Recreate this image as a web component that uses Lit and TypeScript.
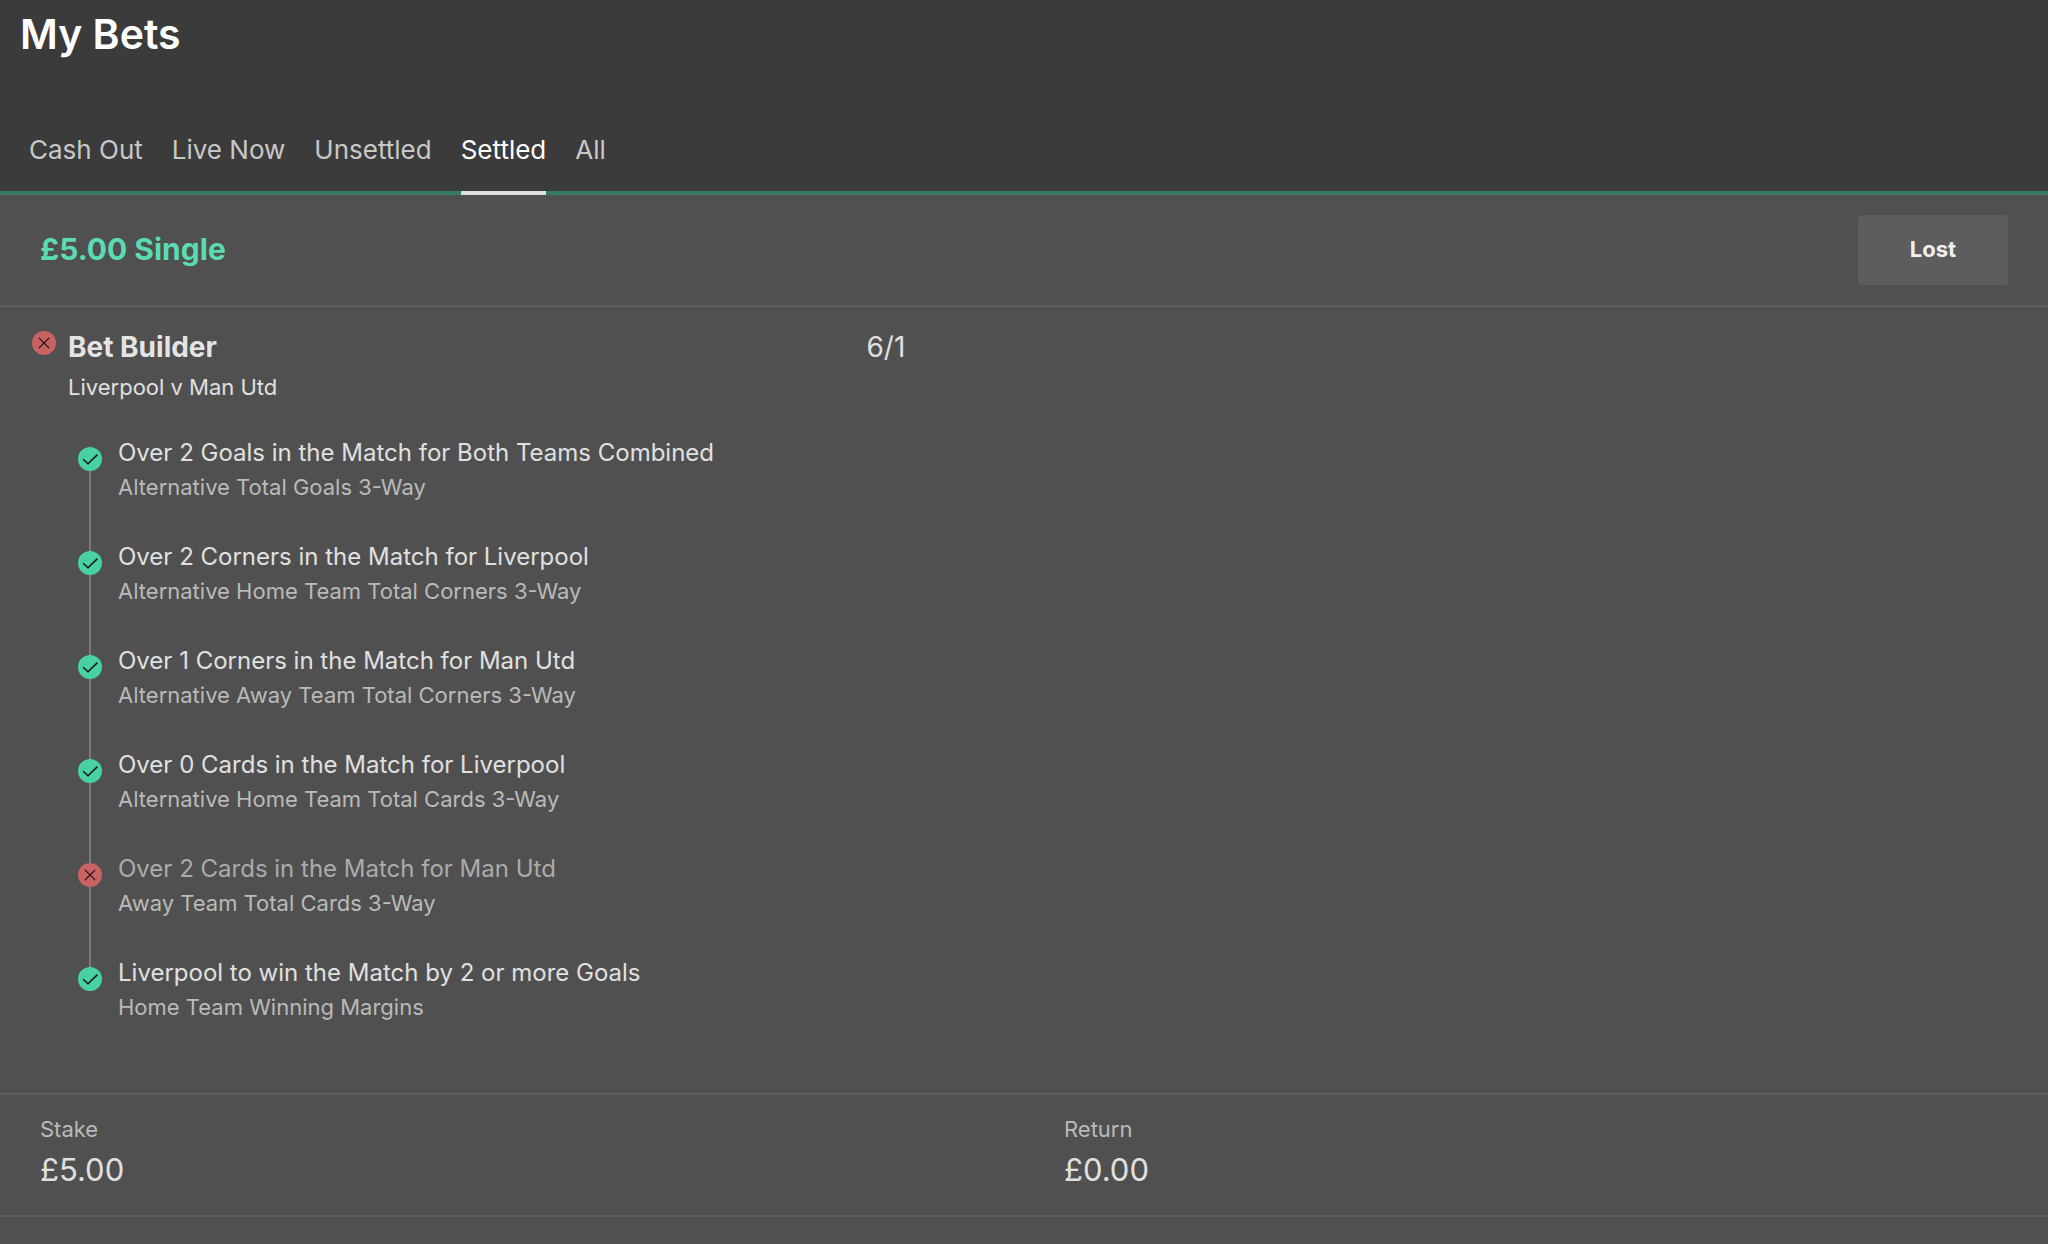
import { LitElement, html, css, svg, nothing } from "lit";
import { customElement, property, state } from "lit/decorators.js";
import { classMap } from "lit/directives/class-map.js";

type Result = "won" | "lost";

interface Leg {
  title: string;
  market: string;
  result: Result;
}

const TABS = ["Cash Out", "Live Now", "Unsettled", "Settled", "All"];

const LEGS: Leg[] = [
  { title: "Over 2 Goals in the Match for Both Teams Combined", market: "Alternative Total Goals 3-Way", result: "won" },
  { title: "Over 2 Corners in the Match for Liverpool", market: "Alternative Home Team Total Corners 3-Way", result: "won" },
  { title: "Over 1 Corners in the Match for Man Utd", market: "Alternative Away Team Total Corners 3-Way", result: "won" },
  { title: "Over 0 Cards in the Match for Liverpool", market: "Alternative Home Team Total Cards 3-Way", result: "won" },
  { title: "Over 2 Cards in the Match for Man Utd", market: "Away Team Total Cards 3-Way", result: "lost" },
  { title: "Liverpool to win the Match by 2 or more Goals", market: "Home Team Winning Margins", result: "won" },
];

@customElement("result-icon")
export class ResultIcon extends LitElement {
  @property() result: Result = "won";

  static styles = css`
    :host {
      display: block;
      flex: none;
      width: 24px;
      height: 24px;
    }
    .icon {
      display: block;
      width: 100%;
      height: 100%;
    }
    .mark {
      fill: none;
      stroke: #141414;
    }
    .won {
      fill: #48d1a4;
    }
    .lost {
      fill: #c96263;
    }
  `;

  render() {
    const won = this.result === "won";
    return html`<svg class="icon" viewBox="0 0 24 24" role="img" aria-label=${won ? "Won" : "Lost"}>
      ${svg`<circle class=${this.result} cx="12" cy="12" r="12" />`}
      ${won
        ? svg`<path class="mark" stroke-width="1.5" d="M5.2 12.3 L10 16.8 L19.4 7.6" />`
        : svg`<path class="mark" stroke-width="1.2" d="M6.9 6.9 L17.2 17.2 M17.2 6.9 L6.9 17.2" />`}
    </svg>`;
  }
}

@customElement("bet-leg")
export class BetLeg extends LitElement {
  @property({ attribute: false }) leg!: Leg;
  @property({ type: Boolean }) first = false;
  @property({ type: Boolean }) last = false;

  static styles = css`
    :host {
      display: flex;
      gap: 16px;
    }
    .rail {
      display: flex;
      flex-direction: column;
      align-items: center;
      width: 24px;
    }
    .line {
      width: 2px;
      flex: 1;
      background: #7b7b7b;
    }
    .lead {
      flex: none;
      height: 10px;
    }
    .hidden {
      visibility: hidden;
    }
    .text {
      display: flex;
      flex-direction: column;
      gap: 4px;
      padding-bottom: 40px;
    }
    .title,
    .market {
      margin: 0;
      font-weight: 400;
    }
    .title {
      font-size: 24px;
      line-height: 32px;
      color: #e0e0e0;
    }
    .market {
      font-size: 22px;
      line-height: 28px;
      color: #bababa;
    }
    .dim {
      color: #ababab;
    }
  `;

  render() {
    return html`
      <div class="rail">
        <span class=${classMap({ line: true, lead: true, hidden: this.first })}></span>
        <result-icon .result=${this.leg.result}></result-icon>
        <span class=${classMap({ line: true, hidden: this.last })}></span>
      </div>
      <div class="text">
        <h3 class=${classMap({ title: true, dim: this.leg.result === "lost" })}>${this.leg.title}</h3>
        <p class="market">${this.leg.market}</p>
      </div>
    `;
  }
}

@customElement("app-root")
export class AppRoot extends LitElement {
  @state() private tab = "Settled";

  static styles = css`
    :host {
      display: block;
      min-height: 100vh;
      background: #505050;
      color: #e0e0e0;
      font-family: Inter, "Liberation Sans", sans-serif;
    }
    h1,
    h2,
    p,
    ul,
    dl,
    dd {
      margin: 0;
      padding: 0;
    }
    .header {
      padding-top: 8px;
      background: #3b3b3b;
      border-bottom: 4px solid #367a62;
    }
    .heading {
      padding: 0 20px;
      font-size: 41px;
      line-height: 52px;
      font-weight: 600;
      color: #fff;
    }
    .tabs {
      display: flex;
      gap: 29px;
      margin-top: 50px;
      padding: 0 29px;
    }
    .tab {
      margin: 0 0 -4px;
      padding: 24px 0 25px;
      border: 0;
      border-bottom: 4px solid transparent;
      background: none;
      font: inherit;
      font-size: 26px;
      line-height: 32px;
      color: #c8c8c8;
      cursor: pointer;
    }
    .tab.active {
      color: #fff;
      border-bottom-color: #e0e0e0;
    }
    .summary {
      display: flex;
      align-items: center;
      justify-content: space-between;
      padding: 20px 40px;
      border-bottom: 2px solid #5d5d5d;
    }
    .stake-title {
      padding-bottom: 2px;
      font-size: 30px;
      line-height: 36px;
      font-weight: 700;
      color: #5adbb1;
    }
    .status {
      min-width: 150px;
      padding: 19px 32px 21px;
      border: 0;
      border-radius: 4px;
      background: #5d5d5d;
      font: inherit;
      font-size: 22px;
      line-height: 30px;
      font-weight: 700;
      color: #f0f0f0;
    }
    .selection {
      padding: 22px 0 32px;
      border-bottom: 2px solid #5d5d5d;
    }
    .builder {
      display: grid;
      grid-template-columns: 11fr 15fr;
    }
    .event {
      display: flex;
      gap: 12px;
      padding-left: 32px;
    }
    .event result-icon {
      margin-top: 2px;
    }
    .names {
      display: flex;
      flex-direction: column;
      gap: 8px;
    }
    .name {
      font-size: 28px;
      line-height: 36px;
      font-weight: 700;
      color: #e4e4e4;
    }
    .fixture {
      font-size: 22px;
      line-height: 28px;
    }
    .odds {
      font-size: 28px;
      line-height: 36px;
    }
    .legs {
      margin-top: 36px;
      padding-left: 78px;
      list-style: none;
    }
    .totals {
      display: grid;
      grid-template-columns: 1fr 1fr;
      border-bottom: 2px solid #5d5d5d;
    }
    .total {
      display: flex;
      flex-direction: column;
      gap: 6px;
      padding: 20px 40px 24px;
    }
    .label {
      font-size: 22px;
      line-height: 28px;
      color: #bababa;
    }
    .value {
      font-size: 31px;
      line-height: 42px;
    }
  `;

  render() {
    return html`
      <header class="header">
        <h1 class="heading">My Bets</h1>
        <nav class="tabs">
          ${TABS.map(
            (name) => html`<button
              type="button"
              class=${classMap({ tab: true, active: name === this.tab })}
              aria-current=${name === this.tab ? "page" : nothing}
              @click=${() => (this.tab = name)}
            >${name}</button>`
          )}
        </nav>
      </header>
      <main>
        <section class="summary">
          <h2 class="stake-title">£5.00 Single</h2>
          <button type="button" class="status">Lost</button>
        </section>
        <section class="selection">
          <div class="builder">
            <div class="event">
              <result-icon result="lost"></result-icon>
              <div class="names">
                <h2 class="name">Bet Builder</h2>
                <p class="fixture">Liverpool v Man Utd</p>
              </div>
            </div>
            <p class="odds">6/1</p>
          </div>
          <ul class="legs">
            ${LEGS.map(
              (leg, i) => html`<li>
                <bet-leg .leg=${leg} ?first=${i === 0} ?last=${i === LEGS.length - 1}></bet-leg>
              </li>`
            )}
          </ul>
        </section>
        <dl class="totals">
          <div class="total">
            <dt class="label">Stake</dt>
            <dd class="value">£5.00</dd>
          </div>
          <div class="total">
            <dt class="label">Return</dt>
            <dd class="value">£0.00</dd>
          </div>
        </dl>
      </main>
    `;
  }
}
